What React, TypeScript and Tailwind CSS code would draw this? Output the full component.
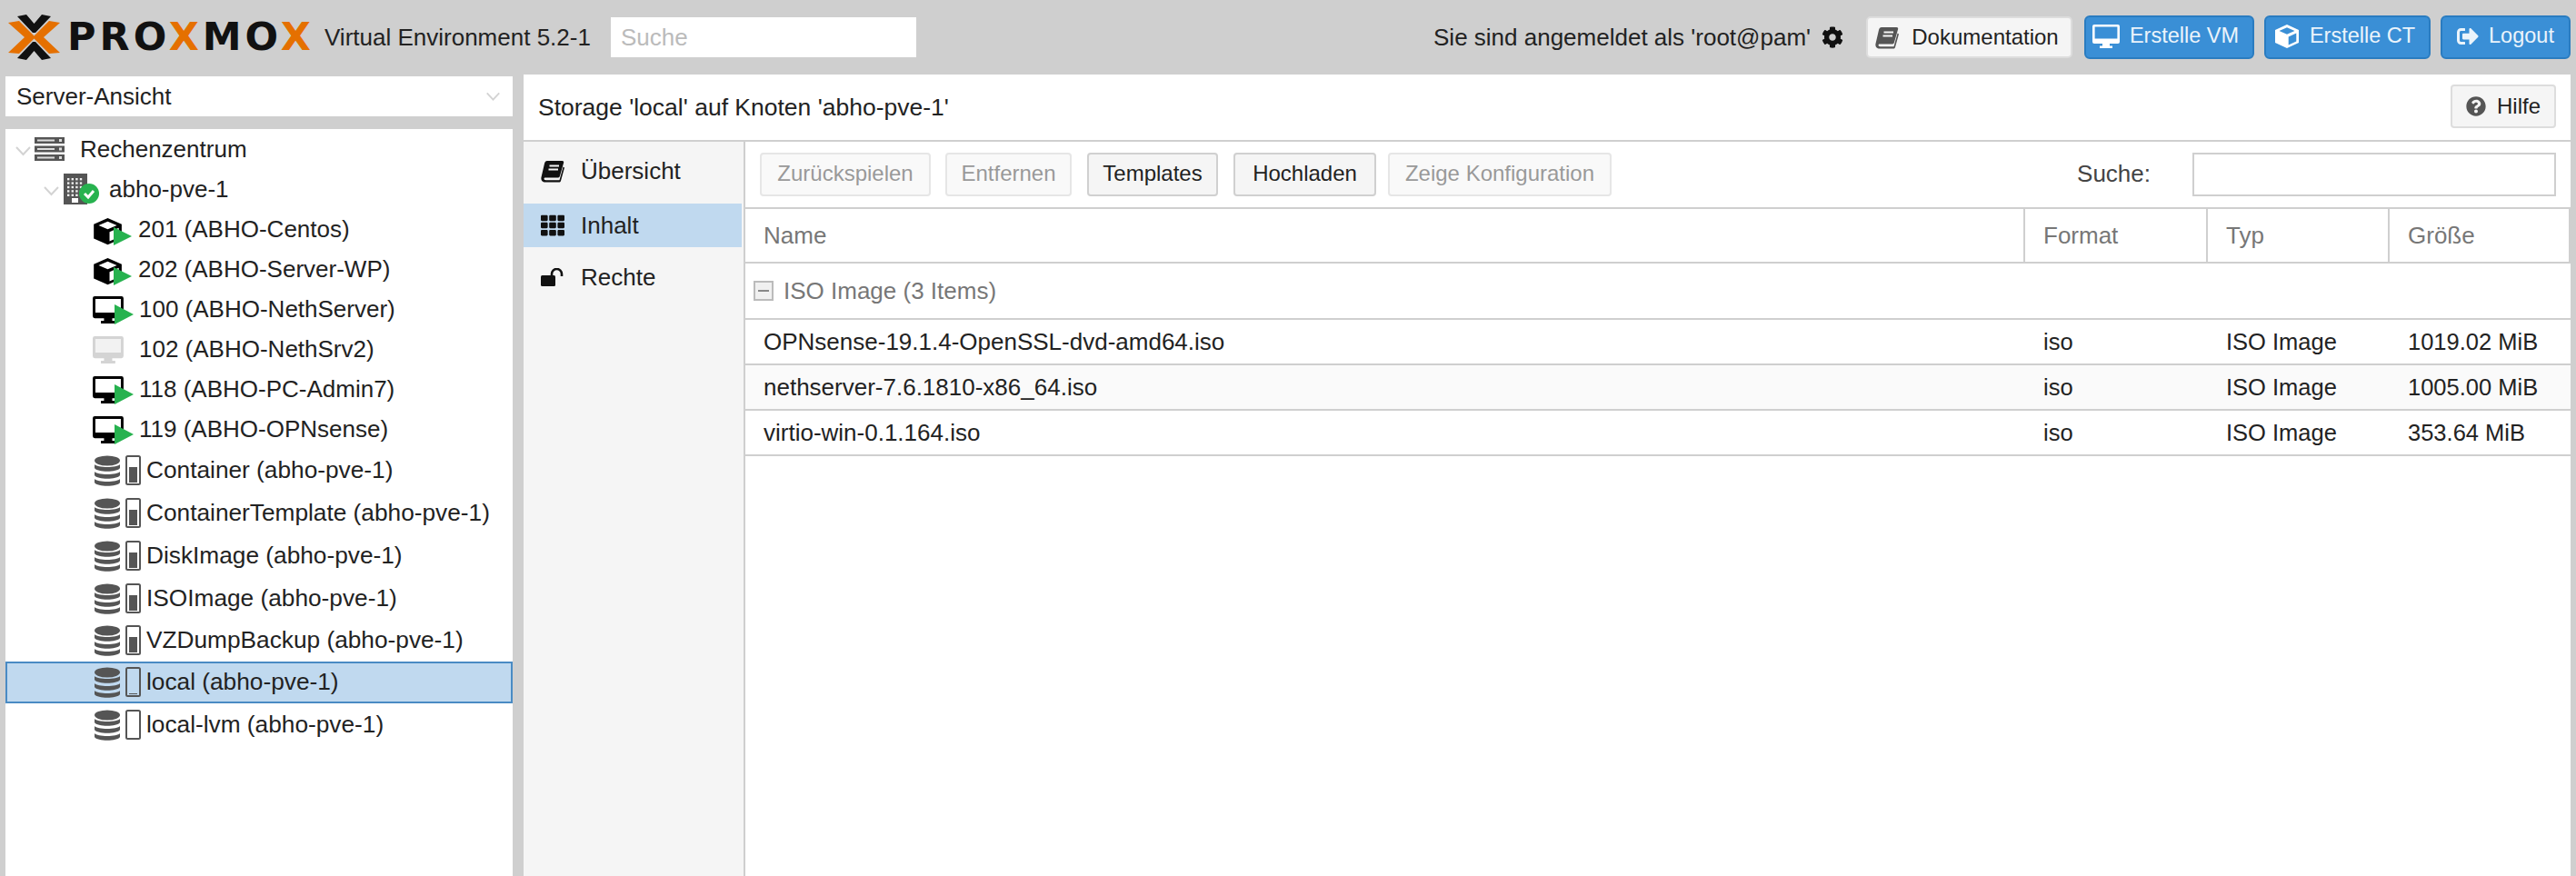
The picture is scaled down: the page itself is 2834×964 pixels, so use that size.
import { FaCog, FaQuestionCircle, FaSignOutAlt, FaTh } from "react-icons/fa";

const GREEN = "#27b24f";

const CUBE_D = "M14 1L27 7V21L14 27L1 21V7ZM14 4.2L5.5 8L14 11.8L22.5 8ZM15.7 14.6V23.6L24.3 19.6V10.6Z";
const MONITOR_D = "M2 0H28A2 2 0 0 1 30 2V19A2 2 0 0 1 28 21H19V23.5H22V26H8V23.5H11V21H2A2 2 0 0 1 0 19V2A2 2 0 0 1 2 0ZM2.6 2.6V15.6H27.4V2.6Z";

function Logo() {
  return (
    <div className="flex items-center w-[345px] shrink-0">
      <svg width="74" height="74" viewBox="0 0 74 74" className="shrink-0 -mr-[1px]">
        <polygon points="18,14 28,12 36.5,22 45,12 55,14 38,32 35,32" fill="#111" />
        <polygon points="18,60 28,62 36.5,52 45,62 55,60 38,42 35,42" fill="#111" />
        <polygon points="8,21 20,19 38,37 20,55 8,54 26,37" fill="#e57000" />
        <polygon points="65,21 53,19 35,37 53,55 65,54 47,37" fill="#e57000" />
      </svg>
      <span className="font-['DejaVu_Sans'] font-bold text-[43px] leading-none tracking-[4px] text-[#111] -mt-[2px]">
        PRO<span className="text-[#e57000]">X</span>MO<span className="text-[#e57000]">X</span>
      </span>
    </div>
  );
}

function BookIcon({ className }: { className: string }) {
  return (
    <svg width="26" height="25" viewBox="0 0 26 25" className={className}>
      <path
        fill="currentColor"
        d="M7 1H23.5C25 1 25.5 2 25 3.5L21 17.5C20.6 19 19.8 19.5 18.5 19.5H5C3.8 19.5 3.4 20.2 3.6 21C3.8 21.8 4.5 22.2 5.5 22.2H20.5L24.6 7.5L26 8.5L22 23C21.6 24 21 24.5 20 24.5H5C2 24.5 0 22.5 .4 19.5L4 4C4.4 2 5.5 1 7 1Z"
      />
      <path d="M9.5 6.5H20M8.5 10.5H19" stroke="#f5f5f5" strokeWidth="2" />
    </svg>
  );
}

function UnlockIcon() {
  return (
    <svg width="26" height="20" viewBox="0 0 26 20" className="shrink-0">
      <rect x="0" y="8" width="16" height="12" rx="1.5" fill="#111" />
      <path d="M12 8V6.5a5.5 5.5 0 0 1 11 0V9" fill="none" stroke="#111" strokeWidth="2.6" />
    </svg>
  );
}

function Chevron({ className }: { className: string }) {
  return (
    <svg width="17" height="11" viewBox="0 0 17 11" fill="none" className={className}>
      <path d="M1 1l7.5 8L16 1" stroke="#d3d3d3" strokeWidth="2" />
    </svg>
  );
}

function RackIcon() {
  return (
    <svg width="33" height="26" viewBox="0 0 33 26" className="shrink-0">
      {[0, 9.5, 19].map((y) => (
        <g key={y}>
          <rect x="0" y={y} width="33" height="7" fill="#555" />
          <rect x="3" y={y + 2.5} width="19" height="2" fill="#ddd" />
          <rect x="27" y={y + 2} width="3" height="3" fill="#ddd" />
        </g>
      ))}
    </svg>
  );
}

function NodeIcon() {
  const dots = [0, 1, 2, 3, 4];
  return (
    <svg width="40" height="34" viewBox="0 0 40 34" className="shrink-0">
      <rect x="0" y="0" width="26" height="34" fill="#555" />
      {dots.map((r) =>
        [0, 1, 2, 3].map((c) => <rect key={`${r}-${c}`} x={4 + c * 4.6} y={5 + r * 4.4} width="2.4" height="2.4" fill="#eee" />),
      )}
      <rect x="9" y="27" width="7" height="5" fill="#fff" />
      <circle cx="28" cy="22" r="11" fill={GREEN} />
      <path d="M23 22l4 4 6-7" stroke="#fff" strokeWidth="3" fill="none" />
    </svg>
  );
}

function CtIcon() {
  return (
    <svg width="44" height="36" viewBox="0 0 44 36" className="shrink-0">
      <path d={CUBE_D} fill="#000" fillRule="evenodd" transform="translate(0,5) scale(1.18,1.12)" />
      <path d="M23 16l20 10-20 10z" fill={GREEN} />
    </svg>
  );
}

function VmIcon({ stopped }: { stopped?: boolean }) {
  if (stopped) {
    return (
      <svg width="46" height="34" viewBox="0 0 46 34" className="shrink-0">
        <path d={MONITOR_D} fill="#d4d4d4" fillRule="evenodd" transform="translate(0,3) scale(1.13,1.15)" />
        <rect x="3" y="6" width="28" height="15" fill="#f2f2f2" />
      </svg>
    );
  }
  return (
    <svg width="46" height="34" viewBox="0 0 46 34" className="shrink-0">
      <path d={MONITOR_D} fill="#000" fillRule="evenodd" transform="translate(0,3) scale(1.13,1.15)" />
      <path d="M24 12l21 11-21 11z" fill={GREEN} />
    </svg>
  );
}

function StorageIcon({ fill }: { fill: number }) {
  return (
    <svg width="52" height="34" viewBox="0 0 52 34" className="shrink-0">
      <ellipse cx="14" cy="6" rx="14" ry="5.5" fill="#555" />
      <path d="M0 8c3 4 25 4 28 0v4c-3 5-25 5-28 0z" fill="#555" transform="translate(0,2)" />
      <path d="M0 8c3 4 25 4 28 0v4c-3 5-25 5-28 0z" fill="#555" transform="translate(0,10)" />
      <path d="M0 8c3 4 25 4 28 0v4c-3 5-25 5-28 0z" fill="#555" transform="translate(0,18)" />
      <rect x="35" y="1" width="15" height="31" rx="1.5" fill="none" stroke="#555" strokeWidth="2" />
      {fill > 0 && <rect x="38" y={30 - fill} width="9" height={fill} fill="#555" />}
    </svg>
  );
}

const guests = [
  { label: "201 (ABHO-Centos)", icon: <CtIcon />, gap: "gap-[6px]" },
  { label: "202 (ABHO-Server-WP)", icon: <CtIcon />, gap: "gap-[6px]" },
  { label: "100 (ABHO-NethServer)", icon: <VmIcon />, gap: "gap-[5px]" },
  { label: "102 (ABHO-NethSrv2)", icon: <VmIcon stopped />, gap: "gap-[5px]" },
  { label: "118 (ABHO-PC-Admin7)", icon: <VmIcon />, gap: "gap-[5px]" },
  { label: "119 (ABHO-OPNsense)", icon: <VmIcon />, gap: "gap-[5px]" },
];

const storages = [
  { label: "Container (abho-pve-1)", fill: 17, row: "h-[47px]" },
  { label: "ContainerTemplate (abho-pve-1)", fill: 17, row: "h-[47px]" },
  { label: "DiskImage (abho-pve-1)", fill: 17, row: "h-[47px]" },
  { label: "ISOImage (abho-pve-1)", fill: 17, row: "h-[47px]" },
  { label: "VZDumpBackup (abho-pve-1)", fill: 17, row: "h-[46px]" },
  { label: "local (abho-pve-1)", fill: 1, row: "h-[46px] bg-[#c0d9ef] border-2 border-[#4a8bc4]", selected: true },
  { label: "local-lvm (abho-pve-1)", fill: 0, row: "h-[47px]" },
];

const files = [
  { name: "OPNsense-19.1.4-OpenSSL-dvd-amd64.iso", size: "1019.02 MiB", bg: "bg-white" },
  { name: "nethserver-7.6.1810-x86_64.iso", size: "1005.00 MiB", bg: "bg-[#fafafa]" },
  { name: "virtio-win-0.1.164.iso", size: "353.64 MiB", bg: "bg-white" },
];

function Tree() {
  return (
    <div className="flex-1 bg-white mt-[14px] text-[26px] text-[#222]">
      <div className="h-[43px] flex items-center pl-[11px]">
        <Chevron className="mr-[4px] mt-[5px]" />
        <RackIcon />
        <span className="ml-[17px] mt-[1px]">Rechenzentrum</span>
      </div>
      <div className="h-[45px] flex items-center pl-[42px]">
        <Chevron className="mr-[5px] mt-[6px]" />
        <NodeIcon />
        <span className="ml-[10px] mt-[1px]">abho-pve-1</span>
      </div>
      {guests.map((g) => (
        <div key={g.label} className={`h-[44px] flex items-center pl-[96px] ${g.gap}`}>
          {g.icon}
          <span>{g.label}</span>
        </div>
      ))}
      {storages.map((s) => (
        <div key={s.label} className={`flex items-center ${s.row} ${s.selected ? "pl-[96px]" : "pl-[98px]"} gap-[5px]`}>
          <StorageIcon fill={s.fill} />
          <span className="text-[26.25px]">{s.label}</span>
        </div>
      ))}
    </div>
  );
}

function ToolButton({ children, disabled, width }: { children: string; disabled?: boolean; width: string }) {
  return (
    <button
      className={
        disabled
          ? `h-[48px] ${width} shrink-0 pb-[2px] rounded-[4px] border-2 border-[#e6e6e6] bg-[#f9f9f9] text-[24px] text-[#999] whitespace-nowrap`
          : `h-[48px] ${width} shrink-0 pb-[2px] rounded-[4px] border-2 border-[#d0d0d0] bg-[#f5f5f5] text-[24px] text-[#222] whitespace-nowrap`
      }
    >
      {children}
    </button>
  );
}

function HeaderButton({ icon, label, width }: { icon: React.ReactNode; label: string; width: string }) {
  return (
    <button className={`h-[48px] ${width} shrink-0 pb-[2px] flex items-center justify-center gap-[11px] rounded-[6px] bg-[#3a8fd6] border-2 border-[#2a7cc0] text-white/90 text-[23.5px] whitespace-nowrap`}>
      {icon}
      {label}
    </button>
  );
}

export default function App() {
  return (
    <div className="w-[2834px] h-[964px] bg-[#cfcfcf] overflow-hidden flex flex-col font-['Liberation_Sans',Arial,sans-serif] text-[#222]">
      {/* top bar */}
      <header className="h-[82px] shrink-0 flex items-center pl-[1px] pr-[6px]">
        <Logo />
        <span className="ml-[11px] text-[26px] text-[#222] whitespace-nowrap">Virtual Environment 5.2-1</span>
        <input
          placeholder="Suche"
          className="ml-[22px] w-[336px] h-[44px] bg-white px-[11px] text-[26px] outline-none placeholder:text-[#bbb]"
        />
        <div className="flex-1" />
        <span className="text-[26px] whitespace-nowrap">Sie sind angemeldet als 'root@pam'</span>
        <FaCog className="ml-[12px] text-[24px] text-[#111]" />
        <button className="ml-[25px] h-[46px] w-[227px] shrink-0 pr-[5px] flex items-center justify-center gap-[14px] rounded-[5px] bg-[#f5f5f5] border-2 border-[#ddd] text-[24px] text-[#222]">
          <BookIcon className="shrink-0 text-[#555]" />
          Dokumentation
        </button>
        <div className="ml-[13px] flex gap-[11px]">
          <HeaderButton
            icon={
              <svg width="30" height="26" viewBox="0 0 30 26" className="shrink-0">
                <path d={MONITOR_D} fill="#fff" fillRule="evenodd" />
              </svg>
            }
            label="Erstelle VM"
            width="w-[187px] pr-[8px]"
          />
          <HeaderButton
            icon={
              <svg width="28" height="28" viewBox="0 0 28 28" className="shrink-0">
                <path d={CUBE_D} fill="#fff" fillRule="evenodd" />
              </svg>
            }
            label="Erstelle CT"
            width="w-[183px] pr-[6px]"
          />
          <HeaderButton icon={<FaSignOutAlt className="text-[24px]" />} label="Logout" width="w-[143px]" />
        </div>
      </header>

      <div className="flex-1 min-h-0 flex pl-[6px] pr-[6px] gap-[12px]">
        {/* left column */}
        <aside className="w-[558px] shrink-0 flex flex-col pt-[2px]">
          <div className="h-[44px] bg-white flex items-center justify-between pl-[12px] pr-[13px] text-[26px]">
            Server-Ansicht
            <Chevron className="scale-90" />
          </div>
          <Tree />
        </aside>

        {/* main panel */}
        <main className="flex-1 min-w-0 bg-white flex flex-col">
          <div className="h-[74px] shrink-0 flex items-center justify-between pl-[16px] pr-[16px] border-b-2 border-[#cfcfcf]">
            <span className="text-[26.5px] mt-[1px]">Storage 'local' auf Knoten 'abho-pve-1'</span>
            <button className="w-[116px] h-[48px] flex items-center justify-center gap-[12px] rounded-[4px] border-2 border-[#ddd] bg-[#f5f5f5] text-[24px] -mt-[2px]">
              <FaQuestionCircle className="text-[22px] text-[#555]" />
              Hilfe
            </button>
          </div>

          <div className="flex-1 min-h-0 flex">
            {/* nav */}
            <nav className="w-[244px] shrink-0 bg-[#f5f5f5] border-r-2 border-[#cfcfcf] text-[26px] pr-[2px]">
              <div className="h-[68px] pb-[4px] flex items-center gap-[18px] pl-[19px]">
                <BookIcon className="shrink-0 text-[#111]" />
                Übersicht
              </div>
              <div className="h-[48px] flex items-center gap-[18px] pl-[19px] bg-[#c0d9ef]">
                <FaTh className="text-[26px] text-[#111]" />
                Inhalt
              </div>
              <div className="h-[66px] flex items-center gap-[18px] pl-[19px]">
                <UnlockIcon />
                Rechte
              </div>
            </nav>

            {/* content */}
            <section className="flex-1 min-w-0 flex flex-col">
              <div className="h-[74px] shrink-0 flex items-center pl-[16px] pr-[16px] border-b-2 border-[#cfcfcf]">
                <ToolButton disabled width="w-[188px]">Zurückspielen</ToolButton>
                <div className="ml-[16px]"><ToolButton disabled width="w-[139px]">Entfernen</ToolButton></div>
                <div className="ml-[17px]"><ToolButton width="w-[144px]">Templates</ToolButton></div>
                <div className="ml-[17px]"><ToolButton width="w-[157px]">Hochladen</ToolButton></div>
                <div className="ml-[13px]"><ToolButton disabled width="w-[246px]">Zeige Konfiguration</ToolButton></div>
                <div className="flex-1" />
                <span className="text-[26px] text-[#444] -mt-[2px]">Suche:</span>
                <input className="ml-[46px] w-[400px] h-[48px] border-2 border-[#cfcfcf] bg-white outline-none" />
              </div>

              <div className="h-[60px] shrink-0 grid grid-cols-[1fr_201px_200px_201px] border-b-2 border-[#cfcfcf] text-[26px] text-[#777]">
                <div className="flex items-center pl-[20px]">Name</div>
                <div className="flex items-center pl-[20px] border-l-2 border-[#cfcfcf]">Format</div>
                <div className="flex items-center pl-[20px] border-l-2 border-[#cfcfcf]">Typ</div>
                <div className="flex items-center pl-[20px] border-x-2 border-[#cfcfcf]">Größe</div>
              </div>

              <div className="h-[62px] shrink-0 flex items-center pl-[9px] border-b-2 border-[#cfcfcf] text-[26px] text-[#777]">
                <span className="w-[22px] h-[22px] border-2 border-[#bbb] bg-[#f0f0f0] flex items-center justify-center mr-[11px]">
                  <span className="w-[12px] h-[2px] bg-[#888]" />
                </span>
                ISO Image (3 Items)
              </div>

              {files.map((f) => (
                <div key={f.name} className={`h-[50px] shrink-0 grid grid-cols-[1fr_201px_200px_201px] items-center border-b-2 border-[#cfcfcf] text-[25.5px] text-[#222] ${f.bg}`}>
                  <div className="pl-[20px] text-[26px] whitespace-nowrap">{f.name}</div>
                  <div className="pl-[22px]">iso</div>
                  <div className="pl-[22px]">ISO Image</div>
                  <div className="pl-[22px]">{f.size}</div>
                </div>
              ))}
            </section>
          </div>
        </main>
      </div>
    </div>
  );
}
